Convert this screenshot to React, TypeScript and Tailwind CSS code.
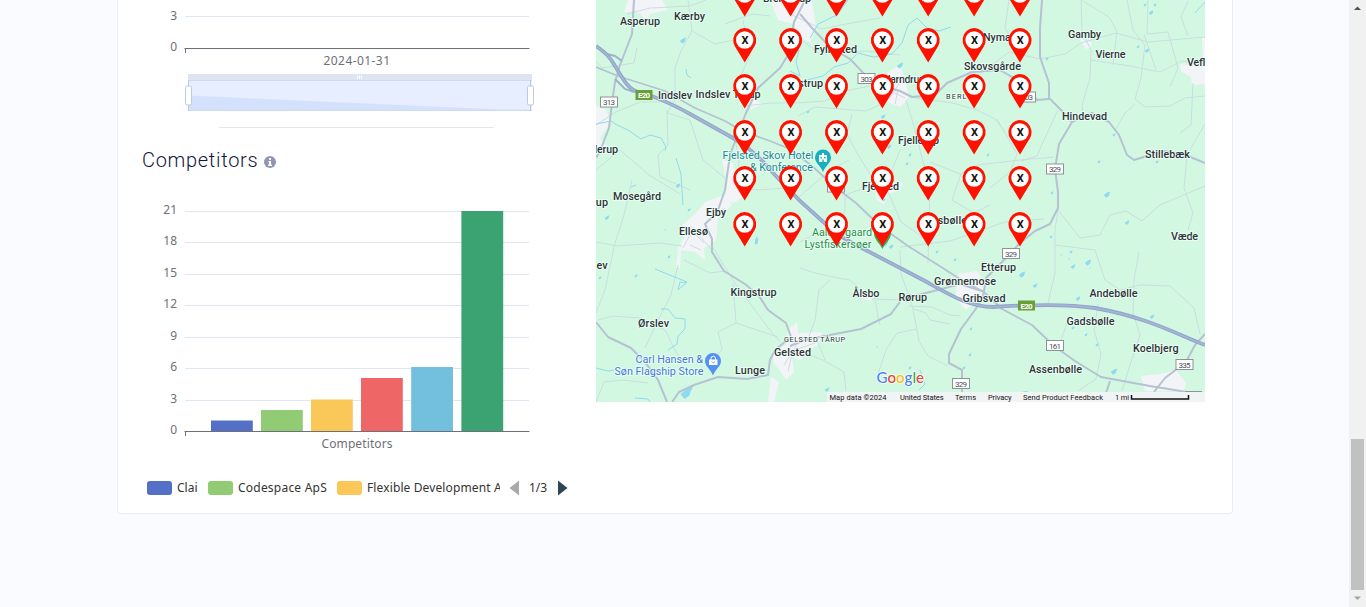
import React from 'react';

const CHART_FONT = "font-['Noto_Sans','Noto_Sans_CJK_SC',sans-serif]";

type Label = { x: number; y: number; t: string; w: number; c?: string; s?: number };

const places: Label[] = [
  { x: 620, y: 25, t: 'Asperup', w: 40 },
  { x: 674, y: 20, t: 'Kærby', w: 31 },
  { x: 658, y: 99, t: 'Indslev', w: 34 },
  { x: 695.5, y: 98, t: 'Indslev Tårup', w: 65 },
  { x: 594.5, y: 153, t: 'lerup', w: 23.5 },
  { x: 613, y: 199.5, t: 'Mosegård', w: 48 },
  { x: 592, y: 206, t: 'rup', w: 16 },
  { x: 706, y: 216, t: 'Ejby', w: 20 },
  { x: 679, y: 235, t: 'Ellesø', w: 29 },
  { x: 596.5, y: 268.5, t: 'ev', w: 11 },
  { x: 730.5, y: 295.5, t: 'Kingstrup', w: 46 },
  { x: 638, y: 326.5, t: 'Ørslev', w: 31 },
  { x: 735, y: 374, t: 'Lunge', w: 30 },
  { x: 774, y: 355.5, t: 'Gelsted', w: 37 },
  { x: 763, y: 2, t: 'Brenderup', w: 48 },
  { x: 814, y: 52.5, t: 'Fyllested', w: 43 },
  { x: 791, y: 86.5, t: 'Ostrup', w: 32 },
  { x: 883, y: 83, t: 'Harndrup', w: 42 },
  { x: 983, y: 41, t: 'Nymark', w: 37 },
  { x: 964, y: 69.5, t: 'Skovsgårde', w: 57 },
  { x: 898, y: 143.5, t: 'Fjellerup', w: 41 },
  { x: 862, y: 189.5, t: 'Fjelsted', w: 37 },
  { x: 924, y: 224, t: 'Husbølle', w: 43 },
  { x: 1068, y: 38, t: 'Gamby', w: 33 },
  { x: 1095.5, y: 57.5, t: 'Vierne', w: 30 },
  { x: 1187, y: 65.5, t: 'Veflinge', w: 38 },
  { x: 1062, y: 120, t: 'Hindevad', w: 45 },
  { x: 1145, y: 157.5, t: 'Stillebæk', w: 45 },
  { x: 1171, y: 240, t: 'Væde', w: 27 },
  { x: 981, y: 271, t: 'Etterup', w: 35 },
  { x: 934, y: 284.5, t: 'Grønnemose', w: 62 },
  { x: 962.5, y: 302, t: 'Gribsvad', w: 43 },
  { x: 852.5, y: 297, t: 'Ålsbo', w: 27 },
  { x: 898.5, y: 300.5, t: 'Rørup', w: 28.5 },
  { x: 1089.5, y: 297, t: 'Andebølle', w: 48 },
  { x: 1066.5, y: 325, t: 'Gadsbølle', w: 48 },
  { x: 1133, y: 352, t: 'Koelbjerg', w: 45.5 },
  { x: 1029, y: 372.5, t: 'Assenbølle', w: 53 },
  { x: 722.5, y: 159, t: 'Fjelsted Skov Hotel', w: 91, c: '#168a94' },
  { x: 750, y: 171, t: '& Konference', w: 63, c: '#168a94' },
  { x: 812, y: 235.5, t: 'Aalebogaard', w: 60, c: '#249147' },
  { x: 804.5, y: 248, t: 'Lystfiskersøer', w: 67, c: '#249147' },
  { x: 635.5, y: 362.5, t: 'Carl Hansen &', w: 67.5, c: '#3f79e0' },
  { x: 614.5, y: 375, t: 'Søn Flagship Store', w: 89, c: '#3f79e0' },
  { x: 784, y: 342, t: 'GELSTED TÅRUP', w: 61, s: 7.3 },
  { x: 946, y: 99, t: 'BERLIN', w: 30, s: 7.3 },
];

const shields = [
  { x: 609, y: 102, t: '313' },
  { x: 866.5, y: 78.5, t: '303' },
  { x: 1027, y: 97, t: '303' },
  { x: 1055, y: 169, t: '329' },
  { x: 836, y: 187, t: '303' },
  { x: 1011, y: 253.5, t: '329' },
  { x: 1055, y: 345.5, t: '161' },
  { x: 1184.5, y: 364.5, t: '335' },
  { x: 961, y: 383.5, t: '329' },
];

const mainRoads = [
  'M634 0L632 34L620 65L615 82L612 103L609 128L600 151L596 158',
  'M805 0L794 22L788 55L780 68L758 88L746 113L742 123L730 155L725 190L717 213L705 224L712 239L712 252L724 271L745 284L759 296L768 310L786 323L791 337L775 350L770 360L768 375L747 379L718 377L694 385L679 392L672 402',
  'M596 322L608 337L631 348L645 362L658 380L667 402',
  'M800 14L813 29L830 47L850 59L869 79L885 87L900 91L912 97L935 95L947 83L972 72L1000 70L1022 83L1037 100L1049 99',
  'M1042 0L1040 28L1040 57L1049 83L1049 98L1062 111L1072 122L1059 144L1055 169L1058 192L1058 208L1050 224L1035 231L1020 243L1003 261L986 278L983 297L975 310L961 329L949 354L949 363L962 370L962 402',
  'M1072 122L1092 113L1109 122L1119 135L1127 155L1134 160L1147 156L1165 151L1188 156L1205 163',
  'M790 346L805 340L835 334L861 329L891 314L902 299L930 292L960 284L982 291',
  'M1205 334L1195 345L1186 362L1165 378L1154 392',
  'M1110 381L1103 402',
];

const rail = 'M596 67L618 76L665 91L695 108L725 121L742 131L770 141L790 149L812 166L835 187L856 203L880 226L908 246L938 265L963 281L984 292L1002 309L1032 325L1054 346L1075 361L1101 377L1150 386L1205 395';
const motorway = 'M596 46C606 53 610 57 615 66C623 79 628 89 638 92C655 96 672 104 690 114L733 138C752 149 763 161 775 175L800 201L830 228Q842 238 858 246L925 281C952 296 970 307 993 307C1040 304 1070 304 1095 308C1150 318 1178 335 1205 345';

const minorRoads = [
  'M596 61L602 68L634 63L637 48', 'M627 14L650 8L690 6L706 0', 'M688 0L692 31L681 51L675 68L675 100L667 113L690 120L703 160L725 178',
  'M692 31L715 44L739 39', 'M725 24L752 14L770 16', 'M596 125L616 112L640 102L668 102', 'M596 170L620 150L649 175L680 194',
  'M667 110L668 145L658 155L660 177L690 190', 'M596 242L617 246L660 243L682 246', 'M632 180L624 215L615 243L605 290L596 313',
  'M598 320L612 316L640 318L665 330L680 360', 'M678 265L671 295L658 320L645 348', 'M684 260L710 273L724 271', 'M712 246L735 283L766 325L780 342',
  'M596 402L604 382L623 380L648 383', 'M736 323L718 332L722 349L710 365', 'M733 283L736 323L778 337', 'M735 138L739 160L737 188L758 190L799 187',
  'M739 80L750 55L743 20', 'M745 106L771 103L795 103L825 101L845 91L870 86', 'M799 38L820 54L865 51L900 55', 'M790 14L822 29L846 24L880 18',
  'M887 88L886 102L866 111L815 107L798 116', 'M906 100L914 126L922 158L930 185L928 263', 'M916 98L953 103L977 110L995 119L1005 132',
  'M978 75L1009 52L1040 59L1065 54L1081 43L1116 33L1148 42L1205 37', 'M1009 0L1005 28L1016 46', 'M1081 0L1082 32L1091 50L1090 78L1082 105L1083 118',
  'M1081 0L1109 17L1117 31L1113 65', 'M1127 0L1133 30L1145 45L1141 78L1135 99L1145 107L1170 106L1185 98L1205 96', 'M1091 60L1130 66L1160 72L1182 61L1205 66',
  'M1116 129L1125 113L1135 104', 'M1193 83L1191 125L1180 133', 'M1205 124L1187 155L1184 188L1193 213L1188 230', 'M1188 1L1181 17L1188 36',
  'M852 114L847 134L857 153L876 184', 'M799 197L830 170L849 160', 'M900 150L888 180L876 184L845 195L845 212L825 229L800 242',
  'M930 162L960 174L978 165L1020 160L1054 157', 'M1058 110L1043 142L1037 156L1021 161', 'M997 119L1017 154L1010 172L990 188', 'M961 174L952 200L974 213L990 205',
  'M1058 210L1055 230L1055 273L1048 303', 'M1058 210L1080 238L1100 235L1110 215L1126 211L1142 221L1160 205L1205 186', 'M1055 245L1095 250L1105 280L1120 290L1140 285L1170 286L1194 308L1200 334',
  'M1144 34L1156 70', 'M1148 0L1147 34L1168 32L1178 68L1170 87', 'M1139 252L1134 280L1133 313L1140 335L1130 365L1122 391',
  'M1098 304L1094 330L1101 354L1096 379L1078 391', 'M1070 315L1061 340L1055 346', 'M900 250L901 274L908 293L913 309L919 341L928 356L948 366',
  'M908 306L932 307L950 315L960 316', 'M917 329L897 333L886 350L878 374', 'M872 299L900 300', 'M875 300L878 317L880 325',
  'M800 268L815 273L838 278L850 280L865 294', 'M830 280L819 290L815 320L808 339', 'M797 350L823 360L844 372L846 391', 'M817 340L825 360',
  'M900 247L950 241L1005 222L1044 219', 'M883 180L901 222L928 241', 'M914 309L926 313L930 320L950 324',
];

const water = [
  'M596 124L611 121L617 125L628 130L641 139L650 135L661 138L666 147L665 151', 'M676 158L681 174L682 190L683 205', 'M686 69L687 75L691 78',
  'M799 82L823 76L834 67L848 63L858 53L873 57L892 54L902 43L908 25L917 18L927 28L939 31L951 27', 'M810 38L818 24L837 15L848 0', 'M790 71L800 76L796 62L799 50',
  'M655 269L687 282L678 290L680 282L686 283', 'M661 309L668 309L675 318L685 319L685 329L678 336L677 344L668 350', 'M596 368L608 371L614 370', 'M635 398L648 399L650 402',
  'M636 185L631 187', 'M920 370L925 384L919 390', 'M1015 394L1028 391', 'M1195 13L1205 2',
];

const ponds = [
  [683, 41, 4], [678, 186, 3], [669, 257, 2], [636, 276, 2], [1047, 59, 2], [1138, 47, 2], [1147, 51, 3], [1151, 13, 3], [1145, 5, 2], [1114, 135, 2],
  [1099, 162, 2], [1107, 195, 4], [1052, 193, 2], [1157, 162, 2], [808, 112, 2], [883, 117, 3], [889, 147, 3], [910, 155, 2], [907, 164, 2], [884, 200, 2],
  [988, 155, 2], [1127, 223, 3], [1051, 237, 2], [1071, 252, 2], [1088, 263, 4], [1073, 267, 3], [1022, 275, 4], [1035, 286, 3], [1078, 299, 3], [1152, 317, 3],
  [885, 244, 4], [891, 247, 3], [937, 252, 2], [955, 260, 2], [971, 329, 2], [970, 355, 2], [964, 368, 2], [910, 368, 2], [877, 347, 1], [827, 390, 3],
  [686, 394, 7], [690, 389, 4], [1114, 372, 4], [1086, 335, 2], [1097, 345, 2], [1155, 5, 2], [689, 210, 2], [665, 230, 1], [600, 278, 2], [607, 218, 3],
  [900, 66, 4], [757, 240, 2], [1073, 328, 2], [1061, 255, 1], [1069, 259, 1], [1090, 268, 1],
];

const towns = [
  'M628 0L662 0L668 10L650 14L646 22L640 13L624 12Z',
  'M770 0L812 0L816 28L810 42L800 38L794 24L778 20Z',
  'M596 106L606 110L611 122L600 138L607 147L596 155Z',
  'M705 202L725 195L732 205L718 218L716 240L704 248L705 260L695 252L681 250L680 268L676 268L678 248L684 238L679 228L695 214Z',
  'M722 160L733 163L735 184L745 195L734 203L725 200L727 182Z',
  'M748 95L762 104L750 110Z',
  'M888 72L900 65L905 80L909 97L901 107L886 102L883 90Z',
  'M1079 39L1092 42L1091 47L1086 49Z', 'M1180 64L1205 67L1205 84L1192 85L1191 77L1181 71Z', 'M1202 37L1205 37L1205 60L1203 60Z',
  'M875 188L886 185L903 182L900 190L888 194L884 205L876 199Z',
  'M788 330L797 322L798 333L822 332L818 345L808 350L800 360L792 357L794 372L786 380L780 371L774 363L772 352L786 345Z',
  'M771 377L779 382L774 402L768 402Z', 'M858 296L873 296L870 301Z', 'M959 274L977 271L985 283L980 298L966 310L955 298Z',
  'M1141 376L1160 374L1176 370L1186 383L1184 391L1145 391Z',
];

const pinX = [744.7, 790.6, 836.5, 882.4, 928.2, 974.1, 1020];
const pinY = [-6, 40, 86, 132, 178, 224];

function MapView() {
  return (
    <svg viewBox="596 0 609 402" className="block h-[402px] w-[609px] shrink-0 font-['Roboto',sans-serif]">
      <rect x="596" y="0" width="609" height="402" fill="#d3f8e2" />
      <g fill="#f3f4f7">{towns.map((d) => <path key={d} d={d} />)}</g>
      <g fill="none" stroke="#c9dfdf" strokeWidth="1" strokeLinejoin="round">
        {minorRoads.map((d) => <path key={d} d={d} />)}
      </g>
      <path d="M683 248L692 231L704 243M690 245L701 250M691 226L711 249M884 88L905 98M889 99L900 82M895 104L898 90M780 355L815 343M784 365L800 340M788 371L793 350" stroke="#d4dae2" fill="none" />
      <g fill="none" stroke="#90daee" strokeWidth="1">{water.map((d) => <path key={d} d={d} />)}</g>
      <g fill="#90daee">
        {ponds.map(([x, y, r]) => (
          <path key={`${x}-${y}`} d={`M${x - r * 0.8} ${y}l${r * 0.8} ${-r * 0.6}l${r * 0.8} ${-r * 0.3}l${-r * 0.3} ${r * 1.1}l${-r * 0.7} ${r * 0.5}z`} />
        ))}
        <path d="M755 240L757 236L758 243L755 245Z" />
      </g>
      <g fill="none" stroke="#b4c2d2" strokeWidth="2" strokeLinejoin="round">
        {mainRoads.map((d) => <path key={d} d={d} />)}
        <path d={rail} strokeWidth="1.8" />
      </g>
      <path d="M607 54L615 56L622 61M615 79L625 89L634 92" fill="none" stroke="#a0b1cf" strokeWidth="2" />
      <path d={motorway} fill="none" stroke="#92a5ca" strokeWidth="3.8" />
      <path d={motorway} fill="none" stroke="#a7b6d5" strokeWidth="1.5" />

      {shields.map((s) => (
        <g key={`${s.x}-${s.y}`}>
          <rect x={s.x - 8.5} y={s.y - 5} width="17" height="10" fill="#fff" stroke="#8b9396" />
          <text x={s.x} y={s.y + 3} textAnchor="middle" fontSize="8" fill="#4b5256" textLength="12">{s.t}</text>
        </g>
      ))}
      {[[644, 95], [1026.5, 305.5]].map(([x, y]) => (
        <g key={x}>
          <rect x={x - 8.5} y={y - 5} width="17" height="10" fill="#689f38" />
          <text x={x} y={y + 3} textAnchor="middle" fontSize="8" fontWeight="700" fill="#fff" textLength="12">E20</text>
        </g>
      ))}

      <g fill="#18afc1">
        <path d="M823 172C821 166 815 163 815 157.500A8 8 0 0 1 831 157.500C831 163 825 166 823 172Z" />
        <path d="M819 155H822V153H824V155H827V162H819Z" fill="#fff" />
        <path d="M820.500 157h1.500v1.500h-1.500zM824 157h1.500v1.500H824zM822.300 159.500h1.500v2.500h-1.500z" />
      </g>
      <path d="M882.400 249C880 243 874 240 874 233A8 8 0 0 1 891 233C891 240 885 243 882.400 249Z" fill="#34a853" />
      <path d="M713 375.500C711 369.500 705 366.500 705 361A8 8 0 0 1 721 361C721 366.500 715 369.500 713 375.500Z" fill="#5491f5" />
      <path d="M709 359.500H717.500V365H709Z" fill="#fff" />
      <path d="M711 360V358.500A2.200 2.200 0 0 1 715.500 358.500V360" fill="none" stroke="#fff" />
      <path d="M711.500 361.500Q713.200 364 715 361.500" fill="none" stroke="#5491f5" strokeWidth=".8" />

      {places.map((p) => (
        <text
          key={`${p.x}-${p.y}`}
          x={p.x}
          y={p.y}
          fontSize={p.s ?? 10.8}
          fontWeight={p.c || p.s ? 400 : 500}
          fill={p.c ?? '#2c3438'}
          stroke="#f4fff9"
          strokeWidth="2"
          strokeOpacity=".75"
          strokeLinejoin="round"
          paintOrder="stroke"
          textLength={p.w}
        >
          {p.t}
        </text>
      ))}

      {pinY.map((y) => pinX.map((x) => (
        <g key={`${x}-${y}`} transform={`translate(${x} ${y})`}>
          <path d="M0 22.500L-9.700 6.500A11.500 12 0 1 1 9.700 6.500Z" fill="#ff1100" />
          <circle r="8.700" fill="#fff" />
          <text x=".3" y="4" textAnchor="middle" fontSize="11" fontWeight="700" fill="#111" textLength="7" lengthAdjust="spacingAndGlyphs">X</text>
        </g>
      )))}

      <text x="876.500" y="382.500" fontSize="15.500" fontWeight="500" stroke="#fff" strokeWidth="1.500" paintOrder="stroke" textLength="47.500" lengthAdjust="spacingAndGlyphs" className="font-['Lato',sans-serif]">
        <tspan fill="#4285f4">G</tspan><tspan fill="#ea4335">o</tspan><tspan fill="#fbbc04">o</tspan><tspan fill="#4285f4">g</tspan><tspan fill="#34a853">l</tspan><tspan fill="#ea4335">e</tspan>
      </text>

      <rect x="827" y="392" width="378" height="10" fill="#f1f4f5" />
      <path d="M1185 391.500H1202" stroke="#8b9698" />
      <g fontSize="7.500" fill="#111">
        <text x="829.500" y="400" textLength="57">Map data ©2024</text>
        <text x="900" y="400" textLength="43.500">United States</text>
        <text x="955" y="400" textLength="21">Terms</text>
        <text x="988" y="400" textLength="23.500">Privacy</text>
        <text x="1023" y="400" textLength="80">Send Product Feedback</text>
        <text x="1115" y="400" textLength="14">1 mi</text>
      </g>
      <path d="M1131.500 395V399H1188.500V395" fill="none" stroke="#111" strokeWidth="1.500" />
    </svg>
  );
}

function TrendChart() {
  return (
    <svg viewBox="142 0 430 120" className={`block h-[120px] w-[430px] ${CHART_FONT}`}>
      <path d="M185 16.500H529" stroke="#e0e6f1" />
      <path d="M184.500 48.500H529.500M185.500 48V53" stroke="#6e7079" fill="none" />
      <g fill="#6e7079" fontSize="12">
        <text x="177" y="20" textAnchor="end">3</text>
        <text x="177" y="51" textAnchor="end">0</text>
        <text x="323.500" y="65" textLength="66.500">2024-01-31</text>
      </g>
      <rect x="188" y="74" width="344" height="7" fill="#dee4f2" />
      <rect x="188" y="81" width="344" height="30" fill="#e6eeff" />
      <path d="M188 95.500L500 109.500H532V111H188Z" fill="#d4e1fd" />
      <path d="M188 80.500H532M188 110.500H532" stroke="#d2dbee" />
      <path d="M188.500 80V111M530.500 80V111" stroke="#bdc8e3" />
      <path d="M357.500 75.500V79M359.500 75.500V79M361.500 75.500V79" stroke="#fff" />
      <rect x="185.500" y="86" width="6" height="19" rx="1.500" fill="#fff" stroke="#bdc8e3" />
      <rect x="527.500" y="86" width="6" height="19" rx="1.500" fill="#fff" stroke="#bdc8e3" />
    </svg>
  );
}

const bars = [
  { x: 211, top: 420.5, c: '#5470c6' },
  { x: 261, top: 410, c: '#91cc75' },
  { x: 311, top: 399.5, c: '#fac858' },
  { x: 361, top: 378, c: '#ee6666' },
  { x: 411.2, top: 367, c: '#73c0de' },
  { x: 461.4, top: 211, c: '#3ba272' },
];

function BarChart() {
  return (
    <svg viewBox="142 180 430 280" className={`block h-[280px] w-[430px] ${CHART_FONT}`}>
      {[21, 18, 15, 12, 9, 6, 3, 0].map((v) => {
        const y = Math.round(431 - (v * 220) / 21);
        return (
          <g key={v}>
            {v > 0 && <path d={`M185 ${y + 0.5}H529`} stroke="#e0e6f1" />}
            <text x="177" y={y + 3} textAnchor="end" fontSize="12" fill="#6e7079">{v}</text>
          </g>
        );
      })}
      {bars.map((b) => <rect key={b.x} x={b.x} y={b.top} width="41.800" height={431 - b.top} fill={b.c} />)}
      <path d="M184.500 431.500H529.500M185.500 431V436" stroke="#6e7079" fill="none" />
      <text x="321.500" y="448" fontSize="12" fill="#6e7079" textLength="71">Competitors</text>
    </svg>
  );
}

function Swatch({ className }: { className: string }) {
  return <span className={`mr-[5px] h-[14px] w-[25px] shrink-0 rounded-[3px] ${className}`} />;
}

function Legend() {
  return (
    <div className={`ml-[5px] mt-[18px] flex h-5 items-center whitespace-nowrap text-[12px] leading-5 text-[#333] ${CHART_FONT}`}>
      <div className="flex w-[353px] items-center overflow-hidden">
        <Swatch className="bg-[#5470c6]" />
        <span className="w-[31px] shrink-0">Clai</span>
        <Swatch className="bg-[#91cc75]" />
        <span className="w-[99px] shrink-0 tracking-[0.22px]">Codespace ApS</span>
        <Swatch className="bg-[#fac858]" />
        <span className="shrink-0 tracking-[0.12px]">Flexible Development ApS</span>
      </div>
      <svg viewBox="0 0 10 16" className="ml-[9px] h-4 w-[10px]"><path d="M10 0.500V15.500L0.500 8Z" fill="#aaa" /></svg>
      <span className="ml-[10px] w-[19px]">1/3</span>
      <svg viewBox="0 0 10 16" className="ml-[10px] h-4 w-[10px]"><path d="M0 0.500V15.500L9.500 8Z" fill="#2f4554" /></svg>
    </div>
  );
}

export default function App() {
  return (
    <div className="flex h-[607px] w-[1366px] overflow-hidden bg-[#fafbff]">
      <main className="flex-1 pl-[117px]">
        <section className="flex h-[514px] w-[1116px] rounded-b border-x border-b border-[#ebedf2] bg-white pl-6">
          <div className="w-[454px] shrink-0">
            <TrendChart />
            <div className="ml-[77px] mt-[7px] h-px w-[275px] bg-[#e5e7eb]" />
            <div className="flex h-[52px] items-start pt-[18px]">
              <h2 className="w-[122px] whitespace-nowrap text-[20px] font-light leading-7 tracking-[0.7px] text-[#12163a] [font-family:Roboto,sans-serif]">Competitors</h2>
              <svg viewBox="0 0 12 12" className="mt-[10px] h-3 w-3">
                <circle cx="6" cy="6" r="6" fill="#9295b5" />
                <path d="M5 2h2v2H5zM4.500 5H7v3.500h1V10H4.200V8.500H5V6.300h-.500z" fill="#fff" />
              </svg>
            </div>
            <BarChart />
            <Legend />
          </div>
          <MapView />
        </section>
      </main>
      <aside className="flex w-[17px] flex-col items-center bg-[#f1f1f1]">
        <svg viewBox="0 0 17 17" className="h-[17px] w-[17px]"><path d="M5 10H12L8.500 6.500Z" fill="#505050" /></svg>
        <div className="mt-[422px] h-[151px] w-[13px] bg-[#c1c1c1]" />
        <svg viewBox="0 0 17 17" className="h-[17px] w-[17px]"><path d="M5 6.500H12L8.500 10Z" fill="#a3a3a3" /></svg>
      </aside>
    </div>
  );
}
